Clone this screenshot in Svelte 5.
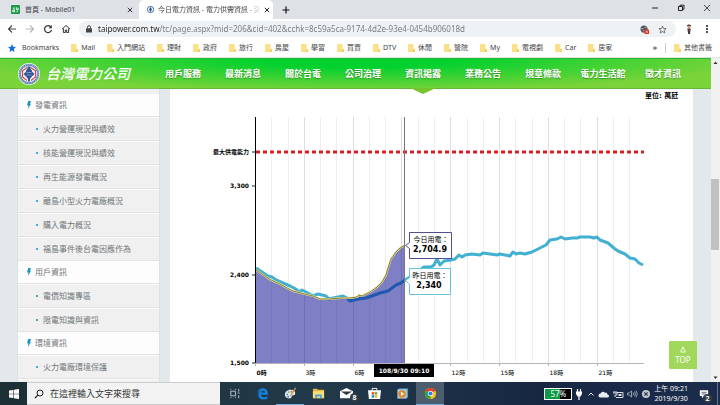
<script lang="ts">
  type Point = [number, number];

  const bookmarks = ['Mail', '入門網站', '理財', '政府', '旅行', '房屋', '學習', '買賣', 'DTV', '休閒', '醫院', 'My', '電視劇', 'Car', '居家'];

  const nav = ['用戶服務', '最新消息', '關於台電', '公司治理', '資訊揭露', '業務公告', '規章條款', '電力生活館', '徵才資訊'];
  const current = '資訊揭露';

  const menu = [
    {
      title: '發電資訊',
      items: ['火力營運現況與績效', '核能營運現況與績效', '再生能源發電概況', '離島小型火力電廠概況', '購入電力概況', '福島事件後台電因應作為'],
    },
    { title: '用戶資訊', items: ['電價知識專區', '限電知識與資訊'] },
    { title: '環境資訊', items: ['火力電廠環境保護'] },
  ];

  // plot area, in svg units
  const plot = { left: 86, right: 474, top: 28, bottom: 274 };
  const now = 235;

  const hours = Array.from({ length: 24 }, (_, h) => h);
  const xOf = (h: number) => Math.round(plot.left + h * 16.27) - 0.5;
  const yTicks = [
    { label: '3,300', y: 97 },
    { label: '2,400', y: 186 },
    { label: '1,500', y: 274 },
  ];

  const yesterday: Point[] = [
    [86, 179], [92, 183], [98, 187], [102, 188], [106, 191], [113, 194], [120, 197], [124, 199], [127, 201], [129, 203], [132, 201],
    [138, 204], [143, 207], [148, 205], [156, 207], [159, 210], [163, 209], [173, 207], [177, 209], [180, 212], [188, 210],
    [196, 209], [202, 207], [210, 204], [218, 202], [222, 199], [226, 196], [231, 194], [235, 191], [240, 188], [245, 185], [250, 181],
    [254, 178], [261, 178], [264, 176], [267, 170], [270, 176], [274, 172], [281, 171], [285, 170], [289, 166], [292, 168], [295, 166],
    [302, 165], [310, 166], [313, 164], [320, 165], [327, 166], [330, 165], [335, 166], [340, 167], [343, 163], [346, 165], [350, 164],
    [355, 165], [362, 163], [370, 159], [376, 156], [380, 151], [387, 150], [391, 148], [395, 150], [402, 149], [407, 149], [410, 148],
    [420, 148], [424, 149], [427, 148], [430, 151], [438, 154], [445, 160], [448, 162], [455, 165], [460, 169], [465, 170], [469, 174], [473, 176],
  ];

  const today: Point[] = [
    [86, 181], [95, 187], [101, 191], [110, 195], [117, 199], [123, 202], [135, 205], [143, 207], [150, 210], [160, 210], [170, 209], [180, 209],
    [187, 208], [189, 206], [192, 207], [200, 203], [207, 198], [212, 193], [216, 186], [218, 179], [221, 170], [226, 163], [230, 159], [235, 156],
  ];

  const toPath = (pts: Point[]) => 'M' + pts.map((p) => p.join(' ')).join('L');
  const area = toPath(today) + `L${now} ${plot.bottom}L${plot.left} ${plot.bottom}Z`;

  let address = $state('taipower.com.tw/tc/page.aspx?mid=206&cid=402&cchk=8c59a5ca-9174-4d2e-93e4-0454b906018d');
  let query = $state('');
</script>

{#snippet folder()}
  <svg class="folder" viewBox="0 0 7 8"><path d="M0 0h5.5v5H7v3H0z" fill="#fbe08a" /><path d="M5.5 5H7v3H4.5z" fill="#f3cf66" /></svg>
{/snippet}

<div class="screen">
  <div class="tabs">
    <div class="tab">
      <svg class="fav" viewBox="0 0 10 10"><rect width="10" height="10" rx="1" fill="#1a9a4c" /><path d="M2 3.500h2.500M2 5.500h2v2h-2zM6 2.500v2.500h2v-2M6 7.500l2-1" stroke="#fff" fill="none" /></svg>
      <span class="title">首頁 - Mobile01</span>
      <button class="close" aria-label="關閉分頁"><svg viewBox="0 0 6 6"><path d="M.8.8l4.400 4.400M5.200.8L.8 5.200" stroke="#333" /></svg></button>
    </div>
    <div class="tab active">
      <svg class="fav" viewBox="0 0 10 10"><circle cx="5" cy="5" r="3.500" fill="#fff" stroke="#3a5f9e" /><path d="M5 2l1.500 3L5 8 3.500 5z" fill="#274f98" /></svg>
      <span class="title fade">今日電力資訊 - 電力供需資訊 - 突</span>
      <button class="close" aria-label="關閉分頁"><svg viewBox="0 0 6 6"><path d="M.8.8l4.400 4.400M5.200.8L.8 5.200" stroke="#222" /></svg></button>
    </div>
    <button class="new-tab" aria-label="新分頁"><svg viewBox="0 0 8 8"><path d="M4 .5v7M.5 4h7" stroke="#111" stroke-width="1.200" /></svg></button>
    <div class="window-buttons">
      <button aria-label="最小化"><svg viewBox="0 0 8 8"><path d="M1 4h6" stroke="#222" /></svg></button>
      <button aria-label="還原"><svg viewBox="0 0 8 8"><path d="M1.500 2.500h4v4h-4zM3 2.500v-1.300h4v4H5.500" fill="none" stroke="#222" /></svg></button>
      <button aria-label="關閉"><svg viewBox="0 0 8 8"><path d="M1 1l6 6M7 1L1 7" stroke="#222" stroke-width=".8" /></svg></button>
    </div>
  </div>

  <div class="toolbar">
    <button class="tool" aria-label="上一頁"><svg viewBox="0 0 10 10"><path d="M9 5H2M5 1.500L1.500 5 5 8.500" fill="none" stroke="#444" stroke-width="1.100" /></svg></button>
    <button class="tool" aria-label="下一頁"><svg viewBox="0 0 10 10"><path d="M1 5h7M5 1.500L8.500 5 5 8.500" fill="none" stroke="#b4b6b8" stroke-width="1.100" /></svg></button>
    <button class="tool" aria-label="重新載入"><svg viewBox="0 0 10 10"><path d="M7.800 2.800A3.500 3.500 0 1 0 8.500 6" fill="none" stroke="#333" stroke-width="1.200" /><path d="M8.800 1v3.200H5.600z" fill="#333" /></svg></button>
    <button class="tool" aria-label="首頁"><svg viewBox="0 0 10 10"><path d="M1 5.200L5 1.500l4 3.700M2.400 4.500v4h1.900V6h1.400v2.500h1.900v-4" fill="none" stroke="#333" /></svg></button>
    <div class="omnibox">
      <svg class="lock" viewBox="0 0 6 8"><rect y="3.300" width="6" height="4.200" rx=".6" fill="#444" /><path d="M1.500 3.500V2.200a1.500 1.500 0 0 1 3 0v1.300" fill="none" stroke="#444" /></svg>
      <input type="text" aria-label="網址" bind:value={address} />
      <button aria-label="已封鎖"><svg viewBox="0 0 10 10"><circle cx="4.500" cy="4.500" r="4" fill="#51565b" /><path d="M1 4h3M5 2.500h3M3 6.500h2" stroke="#cfd2d4" stroke-width=".8" /><rect x="5" y="5" width="5" height="5" rx=".6" fill="#e5352b" /><path d="M6.500 6.500l2 2m0-2l-2 2" stroke="#fff" stroke-width=".7" /></svg></button>
      <button aria-label="加入書籤"><svg viewBox="0 0 10 10"><path d="M5 1.200l1.100 2.600 2.900.3-2.200 1.900.7 2.800L5 7.300 2.500 8.800l.7-2.800L1 4.100l2.900-.3z" fill="none" stroke="#444" stroke-width=".8" /></svg></button>
    </div>
    <button class="tool" aria-label="個人資料"><svg viewBox="0 0 10 10"><path d="M3 1.500q2-1.800 4 0v.8H3z" fill="#222" /><circle cx="5" cy="3" r="1.500" fill="#d59a83" /><path d="M3.300 4.500h3.400L6 10H4.200z" fill="#333b49" /><path d="M5 4.500v2" stroke="#d33" stroke-width=".8" /></svg></button>
    <button class="tool" aria-label="選單"><svg viewBox="0 0 10 10"><circle cx="5" cy="2" r=".9" /><circle cx="5" cy="5" r=".9" /><circle cx="5" cy="8" r=".9" /></svg></button>
  </div>

  <div class="bookmarks">
    <a class="bookmark" href="#bookmarks"><svg class="star" viewBox="0 0 8 8"><path d="M4 0l1.200 2.700L8 3 5.900 5l.6 2.900L4 6.400 1.500 7.900 2.100 5 0 3l2.800-.3z" fill="#1a6ee0" /></svg>Bookmarks</a>
    {#each bookmarks as name}
      <a class="bookmark" href="#bookmark">{@render folder()}{name}</a>
    {/each}
    <button class="more" aria-label="更多書籤">»</button>
    <a class="bookmark other" href="#other">{@render folder()}其他書籤</a>
  </div>

  <div class="viewport">
    <div class="page">
      <header>
        <a class="brand" href="#home">
          <svg viewBox="0 0 22 22">
            <circle cx="11" cy="11" r="11" fill="#f3f6fa" />
            <circle cx="11" cy="11" r="9.200" fill="#fff" stroke="#6484b3" stroke-width="2.200" />
            <circle cx="11" cy="11" r="9.200" fill="none" stroke="#dbe5f2" stroke-width=".8" stroke-dasharray="1 1.300" />
            <path d="M9 4.500L4.500 8v6L9 17.500M13 4.500L17.500 8v6L13 17.500" fill="none" stroke="#d0454f" stroke-width="1.300" />
            <path d="M9.500 3.500h3v2l1.500 2v6L12 16v2.500h-2V16l-2-2.500v-6l1.500-2z" fill="#315796" />
            <path d="M5.500 11L8 8.500v5zM16.500 11L14 8.500v5z" fill="#315796" />
            <path d="M8.500 9.500h5M8.500 12h5" stroke="#aec2e0" stroke-width=".6" />
          </svg>
          <span>台灣電力公司</span>
        </a>
        <nav>
          {#each nav as item}
            <a href="#nav" class:current={item === current}>{item}</a>
          {/each}
        </nav>
      </header>

      <div class="content">
        <aside>
          {#each menu as group}
            <h3>
              <svg viewBox="0 0 4 8"><path d="M1.300 0H4L2.900 2.700H4L1 8l.4-3.700H0z" fill="#1790c4" /></svg>
              {group.title}
            </h3>
            <ul>
              {#each group.items as item}
                <li><a href="#menu">{item}</a></li>
              {/each}
            </ul>
          {/each}
          <div class="rest"></div>
        </aside>

        <main>
          <svg class="chart" viewBox="0 0 523 293" role="img" aria-label="用電曲線">
            <text class="unit" x="475" y="9">單位: 萬瓩</text>

            {#each hours.slice(1) as h}
              <line class="grid" class:strong={h % 3 === 0} x1={xOf(h)} x2={xOf(h)} y1={plot.top} y2={plot.bottom} />
            {/each}

            <path class="yesterday" d={toPath(yesterday)} />
            <path class="area" d={area} />
            <path class="today-glow" d={toPath(today)} />
            <path class="today" d={toPath(today)} />
            <line class="limit" x1={plot.left} x2={plot.right} y1="63" y2="63" />

            <line class="x-axis" x1={plot.left} x2={plot.right} y1="274.5" y2="274.5" />
            <line class="y-axis" x1="85.5" x2="85.5" y1={plot.top} y2={plot.bottom} />
            <line class="tick" x1="82" x2="86" y1="63" y2="63" />
            <text class="y-label" x="79" y="65">最大供電能力</text>
            {#each yTicks as tick}
              <line class="tick" x1="82" x2="86" y1={tick.y} y2={tick.y} />
              <text class="y-label" x="79" y={tick.y + 2}>{tick.label}</text>
            {/each}
            {#each [0, 3, 6, 12, 15, 18, 21] as h}
              <line class="x-tick" x1={xOf(h)} x2={xOf(h)} y1="274" y2="277" />
              <text class="x-label" class:first={h === 0} x={xOf(h) + 1} y="286">{h}時</text>
            {/each}

            <line class="cursor" x1="234.5" x2="234.5" y1={plot.top} y2={plot.bottom} />

            <path class="tip today-tip" d="M239.500 143.500h42v26h-42v-10l-4-3 4-3z" />
            <text class="tip-label" x="261" y="153">今日用電：</text>
            <text class="tip-value" x="260" y="163">2,704.9</text>

            <path class="tip yesterday-tip" d="M239.500 179.500h41v26h-41v-10l-4-4 4-3z" />
            <text class="tip-label" x="260" y="189">昨日用電：</text>
            <text class="tip-value" x="259" y="199">2,340</text>

            <rect x="204" y="275" width="60" height="13" />
            <text class="time" x="234" y="284">108/9/30 09:10</text>
          </svg>
        </main>
      </div>
      <a class="top" href="#top"><svg viewBox="0 0 6 7"><path d="M3 .8L5.300 6H.7z" fill="none" stroke="#fff" stroke-width=".9" /></svg>TOP</a>
    </div>

    <div class="scrollbar">
      <svg viewBox="0 0 9 9"><path d="M2.500 6l2-2.500 2 2.500z" fill="#333" /></svg>
      <div class="track-above"></div>
      <div class="thumb"></div>
      <div class="track-below"></div>
      <svg viewBox="0 0 9 9"><path d="M2.500 3.500l2 2.500 2-2.500z" fill="#333" /></svg>
    </div>
  </div>

  <footer>
    <button class="start" aria-label="開始"><svg viewBox="0 0 10 10"><path d="M0 1.500l4.300-.6v3.800H0zM4.900.8L10 0v4.700H4.900zM0 5.300h4.300v3.800L0 8.500zM4.900 5.300H10V10l-5.100-.8z" fill="#fff" /></svg></button>
    <label class="search">
      <svg viewBox="0 0 10 10"><circle cx="6" cy="4" r="3" fill="none" stroke="#222" /><path d="M3.800 6.200L1 9" stroke="#222" stroke-width="1.200" /></svg>
      <input type="text" aria-label="搜尋" placeholder="在這裡輸入文字來搜尋" bind:value={query} />
    </label>
    <div class="apps">
      <button aria-label="工作檢視"><svg viewBox="0 0 14 14"><path d="M3 4.500h5v5H3zM3 2v1M8 2v1M3 11v1M8 11v1M11.500 2v3M11.500 9v3M10.500 6.500h2" fill="none" stroke="#c3ccd2" /></svg></button>
      <button aria-label="Edge"><svg viewBox="0 0 14 14"><path d="M1.200 6.500C2 3.200 4.500 1.300 7.300 1.300c3.500 0 5.500 2.500 5.500 5.500v1.500H5.300c.3 3 4 3.300 6.900 1.800v2.500c-4 1.900-9.700.9-9.700-4.300 0-2 1-3.500 2.700-4.300-1.700.3-3 1.200-4 2.500zM5.400 6h4.300c0-2.700-4-2.700-4.300 0z" fill="#1381dc" /></svg></button>
      <button class="running" aria-label="小畫家"><svg viewBox="0 0 14 14"><path d="M1 9C.5 5.500 3.500 3 7 3s5.500 2 5 4.500c-.4 2-2.800.8-3.500 2.200C7.800 11 8 12.500 5.500 12.500 3 12.500 1.300 11 1 9z" fill="#dfe9f0" /><circle cx="3.500" cy="8" r="1" fill="#4a9bd2" /><circle cx="5" cy="5.500" r="1" fill="#65b357" /><circle cx="8" cy="5" r="1" fill="#d65b44" /><circle cx="4.500" cy="10.500" r="1" fill="#775eae" /><path d="M12.500 1L7 9.500" stroke="#d99245" stroke-width="1.400" /></svg></button>
      <button aria-label="檔案總管"><svg viewBox="0 0 14 14"><path d="M1 2h4.500l1 1H13v9H1z" fill="#e7b740" /><path d="M1 4.500h12V12H1z" fill="#fbdc77" /><path d="M3.500 8h7v4h-2v-2h-3v2h-2z" fill="#4c9ed8" /></svg></button>
      <button class="mail" aria-label="郵件"><svg viewBox="0 0 14 14"><path d="M0 4.500L7 1l7 3.500V12H0z" fill="#fff" /><path d="M1 4.800L7 8.500l6-3.700z" fill="#273a45" /></svg><span class="badge">8</span></button>
      <button aria-label="市集"><svg viewBox="0 0 14 14"><path d="M4.500 4V1.500h5V4" fill="none" stroke="#fff" /><path d="M0 3.500h14L13 13H1z" fill="#fff" /><path d="M4 5.500h2.700v2.700H4z" fill="#e94b2c" /><path d="M7.300 5.500H10v2.700H7.300z" fill="#6cae2b" /><path d="M4 8.800h2.700v2.700H4z" fill="#1c8bd5" /><path d="M7.300 8.800H10v2.700H7.300z" fill="#f5b221" /></svg></button>
      <button aria-label="媒體播放器"><svg viewBox="0 0 14 14"><rect x="3" y="1.500" width="10" height="10" fill="#5f9cc3" /><rect x="1.500" y="2.500" width="10" height="10" fill="#a9cee0" /><circle cx="6.500" cy="7.500" r="4" fill="#e98425" /><path d="M5.300 5.200l3.700 2.300-3.700 2.300z" fill="#fff" /></svg></button>
      <button class="running open" aria-label="Chrome"><svg viewBox="0 0 14 14"><circle cx="7" cy="7" r="6" fill="#fbc116" /><path d="M7 7L1.800 4A6 6 0 0 1 12.200 4z" fill="#e33b2e" /><path d="M7 7v6A6 6 0 0 1 1.800 4z" fill="#26a148" /><circle cx="7" cy="7" r="2.900" fill="#fff" /><circle cx="7" cy="7" r="2.200" fill="#367cf1" /></svg></button>
    </div>
    <div class="tray">
      <div class="battery"><span>57%</span></div>
      <svg viewBox="0 0 10 12"><path d="M3.500 1v3M6.500 1v3M5 8v4" stroke="#fff" stroke-width="1.200" /><path d="M2 3.500h6V6L6.500 8.500h-3L2 6z" fill="#fff" /></svg>
      <svg viewBox="0 0 10 12"><path d="M2.500 7.500L5 5l2.500 2.500" fill="none" stroke="#e7ebef" /></svg>
      <svg class="wide" viewBox="0 0 12 12"><path d="M2.500 9.500a2 2 0 0 1 0-4Q4 2.500 7 4.800 9 4 9.500 6.500a1.500 1.500 0 0 1 0 3z" fill="#e9edf2" /></svg>
      <svg class="wide" viewBox="0 0 12 12"><path d="M5 4.500h6v5H4M2 3v2M4 3v2M1 5h4v2H3v2" fill="none" stroke="#d8dee5" /><path d="M6.500 6h3v2h-3z" fill="#d8dee5" /></svg>
      <svg class="wide" viewBox="0 0 12 12"><path d="M1.500 5h1.700L5.500 3v6L3.200 7H1.500zM7 4.500q1.200 1.500 0 3M8.500 3.500q2 2.500 0 5M10 2.500q2.600 3.500 0 7" fill="none" stroke="#c6ced6" stroke-width=".7" /></svg>
      <svg class="wide" viewBox="0 0 12 12"><circle cx="6" cy="6" r="4" fill="#c2c8cf" /><path d="M4.300 4.300l3.400 3.400m0-3.400L4.300 7.700" stroke="#26354c" stroke-width="1.100" /></svg>
      <time datetime="2019-09-30T09:21">上午 09:21<br />2019/9/30</time>
      <button class="notice" aria-label="通知"><svg viewBox="0 0 12 12"><path d="M1 1.500h10v7H6L3.500 11V8.500H1z" fill="#fff" /><path d="M3 4h6M3 6h6" stroke="#24324b" stroke-width=".8" /></svg><span class="badge">2</span></button>
    </div>
  </footer>
</div>

<style>
  :global(body) {
    margin: 0;
  }

  .screen {
    display: flex;
    flex-direction: column;
    height: 100vh;
    overflow: hidden;
    background: #fff;
    color: #444;
    font-family: 'Noto Sans', 'Noto Sans CJK TC', sans-serif;
    font-size: 7px;
    line-height: 10px;
  }

  svg {
    display: block;
    flex-shrink: 0;
  }

  a {
    color: inherit;
    text-decoration: none;
  }

  button {
    display: grid;
    place-items: center;
    padding: 0;
    border: 0;
    background: none;
    color: inherit;
    font: inherit;
  }

  input {
    min-width: 0;
    flex: 1;
    padding: 0;
    border: 0;
    outline: 0;
    background: none;
    font: inherit;
  }

  /* browser chrome */
  .tabs {
    display: flex;
    height: 19px;
    flex-shrink: 0;
    background: #dee1e6;
  }

  .tab {
    display: flex;
    align-items: center;
    gap: 5px;
    box-sizing: border-box;
    width: 139px;
    padding: 0 6px 0 11px;
  }

  .tab.active {
    gap: 3px;
    width: 134px;
    padding-left: 7px;
    border-radius: 5px 5px 0 0;
    background: #fff;
  }

  .fav {
    width: 9px;
    height: 9px;
  }

  .title {
    flex: 1;
    overflow: hidden;
    white-space: nowrap;
  }

  .fade {
    overflow: visible;
    mask-image: linear-gradient(90deg, #000 85%, transparent);
  }

  .close svg {
    width: 6px;
    height: 6px;
  }

  .new-tab {
    width: 26px;
  }

  .new-tab svg,
  .window-buttons svg {
    width: 8px;
    height: 8px;
  }

  .window-buttons {
    display: flex;
    margin-left: auto;
  }

  .window-buttons button {
    width: 26px;
    height: 16px;
  }

  .toolbar {
    display: flex;
    align-items: center;
    height: 20px;
    flex-shrink: 0;
    padding: 0 4px 0 3px;
  }

  .tool {
    width: 18px;
    height: 18px;
  }

  .tool svg {
    width: 10px;
    height: 10px;
  }

  .omnibox {
    display: flex;
    flex: 1;
    align-items: center;
    height: 16px;
    margin: 0 4px;
    padding: 0 5px 0 7px;
    border-radius: 8px;
    background: #eff2f4;
    font-size: 8px;
  }

  .omnibox input {
    margin-left: 6px;
    background: linear-gradient(90deg, #222 62px, #74787c 62px);
    background-clip: text;
    -webkit-text-fill-color: transparent;
  }

  .omnibox button {
    width: 18px;
  }

  .omnibox button svg {
    width: 9px;
    height: 9px;
  }

  .lock {
    width: 6px;
    height: 8px;
  }

  .bookmarks {
    display: flex;
    align-items: center;
    gap: 12px;
    height: 19px;
    flex-shrink: 0;
    padding: 0 8px;
    border-bottom: 1px solid #dfe5df;
    box-sizing: border-box;
    white-space: nowrap;
  }

  .bookmark {
    display: flex;
    align-items: center;
    gap: 3px;
  }

  .star {
    width: 8px;
    height: 8px;
    margin-right: 3px;
  }

  .folder {
    width: 7px;
    height: 8px;
  }

  .more {
    margin-left: auto;
    font-weight: 700;
  }

  .other {
    margin-left: -4px;
    padding-left: 8px;
    border-left: 1px solid #ccc;
  }

  /* web page */
  .viewport {
    display: flex;
    flex: 1;
    min-height: 0;
  }

  .page {
    position: relative;
    display: flex;
    flex: 1;
    flex-direction: column;
    min-width: 0;
    overflow: hidden;
    background: #e3e8ea;
  }

  header {
    display: flex;
    align-items: center;
    justify-content: space-between;
    height: 31px;
    flex-shrink: 0;
    box-sizing: border-box;
    padding: 0 18px;
    border-top: 1px solid #26b638;
    border-bottom: 1px solid #67b836;
    background: radial-gradient(ellipse 55% 110% at 50% 0, #00d12e 25%, #7ad339 100%);
    color: #fff;
  }

  .brand {
    display: flex;
    align-items: center;
    gap: 6px;
    font-size: 14px;
    font-style: italic;
    font-weight: 500;
    line-height: 20px;
    white-space: nowrap;
  }

  .brand svg {
    width: 22px;
    height: 22px;
  }

  nav {
    display: grid;
    grid-template-columns: repeat(9, 60px);
    align-self: stretch;
  }

  nav a {
    position: relative;
    display: grid;
    place-items: center;
    font-size: 9px;
    font-weight: 700;
    text-shadow: 0 1px 1px #3a8f2a;
  }

  .current::after {
    content: '';
    position: absolute;
    top: 100%;
    left: 50%;
    border: 13px solid transparent;
    border-top: 6px solid #78c42d;
    border-bottom: 0;
    transform: translateX(-50%);
  }

  .content {
    display: flex;
    flex: 1;
    gap: 11px;
    min-height: 0;
    padding: 0 18px;
  }

  aside {
    display: flex;
    flex-direction: column;
    width: 141px;
    flex-shrink: 0;
    box-sizing: border-box;
    padding-top: 5px;
    background: #f0f0f0;
    box-shadow: 0 0 1px #b8c0c2;
    color: #70767a;
    font-size: 8px;
  }

  h3 {
    display: flex;
    align-items: center;
    gap: 4px;
    height: 23px;
    flex-shrink: 0;
    box-sizing: border-box;
    margin: 0;
    padding-left: 9px;
    border-bottom: 1px solid #e2e2e2;
    background: #fdfdfd;
    font-size: 8px;
    font-weight: 400;
  }

  h3 svg {
    width: 4px;
    height: 8px;
  }

  ul {
    margin: 0;
    padding: 0;
    list-style: none;
  }

  li {
    height: 24px;
    box-sizing: border-box;
    padding-left: 18px;
    border-top: 1px solid #fafafa;
    border-bottom: 1px solid #e3e3e3;
    background: #f0f0f0;
  }

  li a {
    display: flex;
    align-items: center;
    gap: 5px;
    height: 100%;
  }

  li a::before {
    content: '';
    width: 2px;
    height: 2px;
    border-radius: 1px;
    background: #1790c4;
  }

  .rest {
    flex: 1;
    border-top: 1px solid #fafafa;
  }

  main {
    flex: 1;
    min-width: 0;
    background: #fff;
  }

  .chart {
    width: 100%;
    font-family: 'DejaVu Sans', 'Noto Sans CJK TC', sans-serif;
    font-size: 6px;
    fill: #000;
  }

  .unit {
    font-size: 7px;
    font-weight: 700;
  }

  .grid {
    stroke: #efefef;
  }

  .grid.strong {
    stroke: #dedede;
  }

  .yesterday {
    fill: none;
    stroke: #41b0d2;
    stroke-width: 3;
    stroke-linejoin: round;
  }

  .area {
    fill: #00008b;
    fill-opacity: 0.5;
  }

  .today-glow,
  .today {
    fill: none;
    stroke: #ece79a;
    stroke-width: 2;
  }

  .today {
    stroke: #84803f;
    stroke-width: 1;
  }

  .limit {
    stroke: #d61f26;
    stroke-width: 3;
    stroke-dasharray: 4 3;
  }

  .x-axis,
  .x-tick {
    stroke: #b5b5b5;
  }

  .y-axis {
    stroke: #000;
  }

  .tick {
    stroke: #222;
  }

  .cursor {
    stroke: #777;
  }

  .y-label {
    font-weight: 700;
    text-anchor: end;
  }

  .x-label.first {
    font-weight: 700;
  }

  .tip {
    fill: #fff;
    fill-opacity: 0.92;
  }

  .today-tip {
    stroke: #524f8f;
  }

  .yesterday-tip {
    stroke: #68c3dc;
  }

  .tip-label,
  .tip-value,
  .time {
    text-anchor: middle;
  }

  .tip-label {
    font-size: 7px;
  }

  .tip-value {
    font-size: 8px;
    font-weight: 700;
  }

  .time {
    fill: #fff;
    font-weight: 700;
  }

  .top {
    position: absolute;
    right: 14px;
    bottom: 13px;
    display: flex;
    flex-direction: column;
    align-items: center;
    justify-content: center;
    gap: 2px;
    width: 28px;
    height: 28px;
    border-radius: 1px;
    background: #a1d85c;
    color: #fff;
    font-size: 8px;
  }

  .top svg {
    width: 6px;
    height: 7px;
  }

  .scrollbar {
    display: flex;
    flex-direction: column;
    width: 9px;
    background: #f1f1f1;
  }

  .track-above {
    flex: 112;
  }

  .thumb {
    height: 71px;
    margin-right: 1px;
    background: #c1c1c1;
  }

  .track-below {
    flex: 124;
  }

  /* taskbar */
  footer {
    display: flex;
    height: 23px;
    flex-shrink: 0;
    background: linear-gradient(90deg, #1c3036, #22394a 45%, #172743 75%, #1c2c4c);
    color: #fff;
  }

  .start {
    width: 27px;
  }

  .start svg {
    width: 10px;
    height: 10px;
  }

  .search {
    display: flex;
    align-items: center;
    gap: 6px;
    width: 193px;
    box-sizing: border-box;
    padding-left: 7px;
    border: 1px solid #ccc;
    border-width: 1px 0;
    background: #f3f3f3;
    font-size: 9px;
  }

  .search svg {
    width: 10px;
    height: 10px;
  }

  .search input::placeholder {
    color: #333;
    opacity: 1;
  }

  .apps {
    display: flex;
  }

  .apps button {
    position: relative;
    width: 28px;
    box-sizing: border-box;
    border-bottom: 1px solid transparent;
  }

  .apps svg {
    width: 13px;
    height: 13px;
  }

  .apps .running {
    border-bottom-color: #6eb0e6;
  }

  .apps .open {
    background: #4c5d6e;
  }

  .badge {
    position: absolute;
    right: 1px;
    bottom: 2px;
    width: 9px;
    height: 9px;
    border-radius: 5px;
    background: #333b44;
    font-size: 7px;
    font-weight: 700;
    line-height: 9px;
    text-align: center;
  }

  .tray {
    display: flex;
    align-items: center;
    gap: 2px;
    margin-left: auto;
    padding-right: 2px;
  }

  .tray svg {
    width: 10px;
    height: 12px;
  }

  .tray .wide {
    width: 12px;
  }

  .battery {
    width: 26px;
    height: 10px;
    border: 1px solid #fff;
    background: linear-gradient(90deg, #0c9a43 57%, #000 57%);
    font-size: 8px;
    text-align: center;
  }

  time {
    text-align: center;
    white-space: nowrap;
  }

  .notice {
    position: relative;
    width: 28px;
    align-self: stretch;
    border-right: 1px solid #66728a;
  }

  .notice svg {
    width: 10px;
    height: 10px;
  }

  .notice .badge {
    right: 5px;
  }
</style>
